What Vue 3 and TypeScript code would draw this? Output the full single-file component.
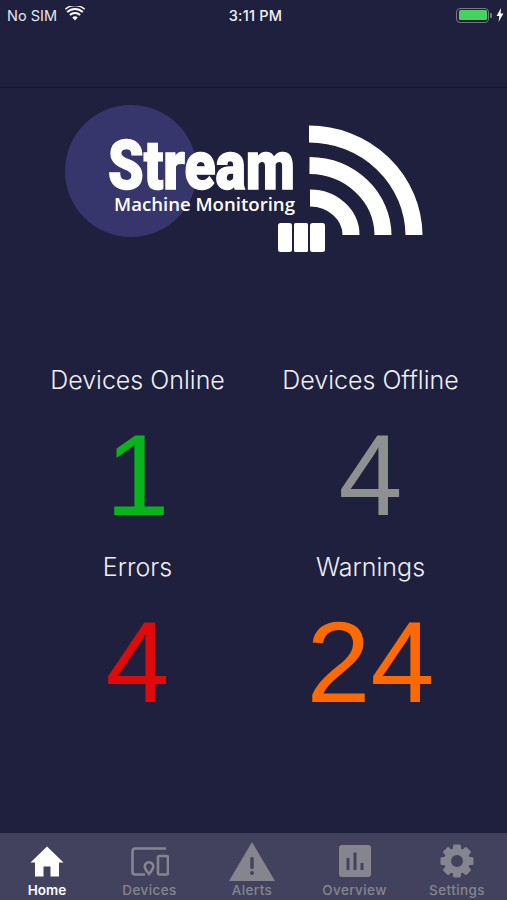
<script setup lang="ts">
interface Stat { label: string; value: number; color: string }
interface Tab { name: string; active?: boolean }

const stats: Stat[] = [
  { label: 'Devices Online', value: 1, color: '#08b31c' },
  { label: 'Devices Offline', value: 4, color: '#8f9090' },
  { label: 'Errors', value: 4, color: '#e00a0a' },
  { label: 'Warnings', value: 24, color: '#ff6a00' },
];

const tabs: Tab[] = [
  { name: 'Home', active: true },
  { name: 'Devices' },
  { name: 'Alerts' },
  { name: 'Overview' },
  { name: 'Settings' },
];

const teeth = [0, 45, 90, 135, 180, 225, 270, 315];
</script>

<template>
  <div class="screen">
    <div class="status">
      <div class="status-left">
        <span>No SIM</span>
        <svg class="wifi" viewBox="0 0 20 15" width="20" height="15">
          <path d="M10 14.5 7.3 11.5a3.8 3.8 0 0 1 5.4 0z" fill="#fff" />
          <path d="M4.9 9a7.4 7.4 0 0 1 10.2 0" fill="none" stroke="#fff" stroke-width="2" />
          <path d="M2.2 6a11.4 11.4 0 0 1 15.6 0" fill="none" stroke="#fff" stroke-width="2" />
          <path d="M.4 3.2a14.6 14.6 0 0 1 19.2 0" fill="none" stroke="#fff" stroke-width="1.4" />
        </svg>
      </div>
      <div class="time">3:11 PM</div>
      <div class="status-right">
        <div class="battery"><div class="battery-fill"></div></div>
        <div class="battery-tip"></div>
        <svg viewBox="0 0 8 14" width="8" height="14">
          <path d="M5 0 .6 8h2.7L2.6 14 7.4 5.6H4.6z" fill="#fff" />
        </svg>
      </div>
    </div>
    <div class="nav"></div>

    <div class="logo-wrap">
      <svg class="logo" viewBox="0 0 507 170" width="507" height="170">
        <circle cx="131" cy="66" r="66" fill="#36366c" />
        <text x="108" y="84" class="logo-title" textLength="187" lengthAdjust="spacingAndGlyphs">Stream</text>
        <text x="114" y="106" class="logo-sub" textLength="181" lengthAdjust="spacingAndGlyphs">Machine Monitoring</text>
        <g fill="none" stroke="#fff" stroke-width="17">
          <path d="M309 29A105 102 0 0 1 414 130" />
          <path d="M309.500 60.500A74 70 0 0 1 383 130" />
          <path d="M310 93A41 37 0 0 1 351 130" />
        </g>
        <g fill="#fff">
          <rect x="278" y="118" width="14" height="29" rx="2.500" />
          <rect x="294" y="118" width="14" height="29" rx="1.500" />
          <rect x="310" y="118" width="15" height="29" rx="2.500" />
        </g>
      </svg>
    </div>

    <div class="stats">
      <div v-for="s in stats" :key="s.label" class="stat">
        <div class="stat-label">{{ s.label }}</div>
        <div class="stat-value" :style="{ color: s.color }">{{ s.value }}</div>
      </div>
    </div>

    <div class="tabbar">
      <div v-for="t in tabs" :key="t.name" class="tab" :class="{ active: t.active }">
        <div class="tab-icon">
          <svg v-if="t.name === 'Home'" viewBox="0 0 34 31" width="34" height="31">
            <path fill="#fff" d="M17 .5 33.500 16.500H29V30.500H20.500V20.500H13.500V30.500H5V16.500H.5z" />
          </svg>
          <svg v-else-if="t.name === 'Devices'" viewBox="0 0 38 29" width="38" height="29">
            <g fill="none" stroke="#85858f" stroke-width="2.600">
              <path d="M35 1.500H4a2.500 2.500 0 0 0-2.500 2.500V25A2.500 2.500 0 0 0 4 27.500H14" />
              <rect x="27" y="9" width="10" height="18.500" rx="1.500" />
              <path d="M18 27C15 23.500 13.800 21.500 13.800 19.500a4.200 4.200 0 0 1 8.400 0C22.200 21.500 21 23.500 18 27z" />
            </g>
          </svg>
          <svg v-else-if="t.name === 'Alerts'" viewBox="0 0 46 39" width="46" height="39">
            <path fill="#85858f" d="M23 0 46 39H0z" />
            <rect x="21.300" y="15" width="3.400" height="12" rx="1.500" fill="#42425f" />
            <circle cx="23" cy="31" r="2" fill="#42425f" />
          </svg>
          <svg v-else-if="t.name === 'Overview'" viewBox="0 0 32 32" width="32" height="32">
            <rect width="32" height="32" rx="3" fill="#85858f" />
            <rect x="7.500" y="13" width="3" height="12" fill="#42425f" />
            <rect x="14.500" y="7.500" width="3" height="17.500" fill="#42425f" />
            <rect x="21.500" y="18" width="3" height="7" fill="#42425f" />
          </svg>
          <svg v-else viewBox="0 0 34 34" width="34" height="34">
            <g fill="#85858f">
              <rect v-for="a in teeth" :key="a" x="13" y="0.500" width="8" height="8" rx="1.500" :transform="`rotate(${a} 17 17)`" />
            </g>
            <circle cx="17" cy="17" r="9.500" fill="none" stroke="#85858f" stroke-width="7" />
          </svg>
        </div>
        <div class="tab-label">{{ t.name }}</div>
      </div>
    </div>
  </div>
</template>

<style scoped>
.screen { width: 507px; height: 900px; background: #1f1f3e; display: flex; flex-direction: column; overflow: hidden; font-family: Inter, "Liberation Sans", sans-serif; color: #fff; }
.status { height: 30px; display: grid; grid-template-columns: 1fr auto 1fr; align-items: center; padding: 0 3px 0 7px; font-size: 14.5px; }
.status-left { display: flex; align-items: center; gap: 8px; color: #e6e6ea; }
.wifi { margin-bottom: 3px; }
.time { font-weight: 500; letter-spacing: .2px; color: #f2f2f4; }
.status-right { display: flex; align-items: center; justify-content: flex-end; }
.battery { width: 33px; height: 15px; border: 1.500px solid #77777f; border-radius: 4px; padding: 1.500px; box-sizing: border-box; }
.battery-fill { height: 100%; background: #43d45e; border-radius: 1.500px; }
.battery-tip { width: 2px; height: 5px; background: #77777f; margin: 0 4px 0 1px; border-radius: 0 1px 1px 0; }
.nav { height: 58px; border-bottom: 1px solid #181833; box-sizing: border-box; }
.logo-wrap { height: 170px; margin-top: 17px; }
.logo { display: block; }
.logo-title { font-family: Roboto, "Liberation Sans", sans-serif; font-weight: 900; font-size: 69px; fill: #fff; stroke: #fff; stroke-width: 1.500px; }
.logo-sub { font-family: "Open Sans", "Liberation Sans", sans-serif; font-weight: 600; font-size: 17.500px; fill: #fff; }
.stats { display: grid; grid-template-columns: 233px 233px; grid-auto-rows: 187px; padding: 0 20px 0 21px; margin-top: 90px; }
.stat { display: flex; flex-direction: column; align-items: center; }
.stat-label { font-size: 25px; line-height: 30px; color: #f1f1f4; font-weight: 300; }
.stat-value { font-family: "Liberation Sans", Arimo, sans-serif; font-size: 115px; line-height: 130px; margin-top: 15px; }
.tabbar { position: absolute; top: 833px; left: 0; width: 507px; height: 67px; background: #42425f; display: grid; grid-template-columns: repeat(5, 102.500px); justify-content: center; padding-right: 3px; box-sizing: border-box; overflow: hidden; }
.tab { display: flex; flex-direction: column; align-items: center; }
.tab-icon { height: 49px; display: flex; align-items: center; justify-content: center; padding-top: 7px; box-sizing: border-box; }
.tab-label { font-size: 13.500px; line-height: 16px; font-weight: 500; letter-spacing: .4px; color: #85858f; }
.tab.active .tab-label { color: #fff; font-weight: 600; letter-spacing: 0; }
</style>
